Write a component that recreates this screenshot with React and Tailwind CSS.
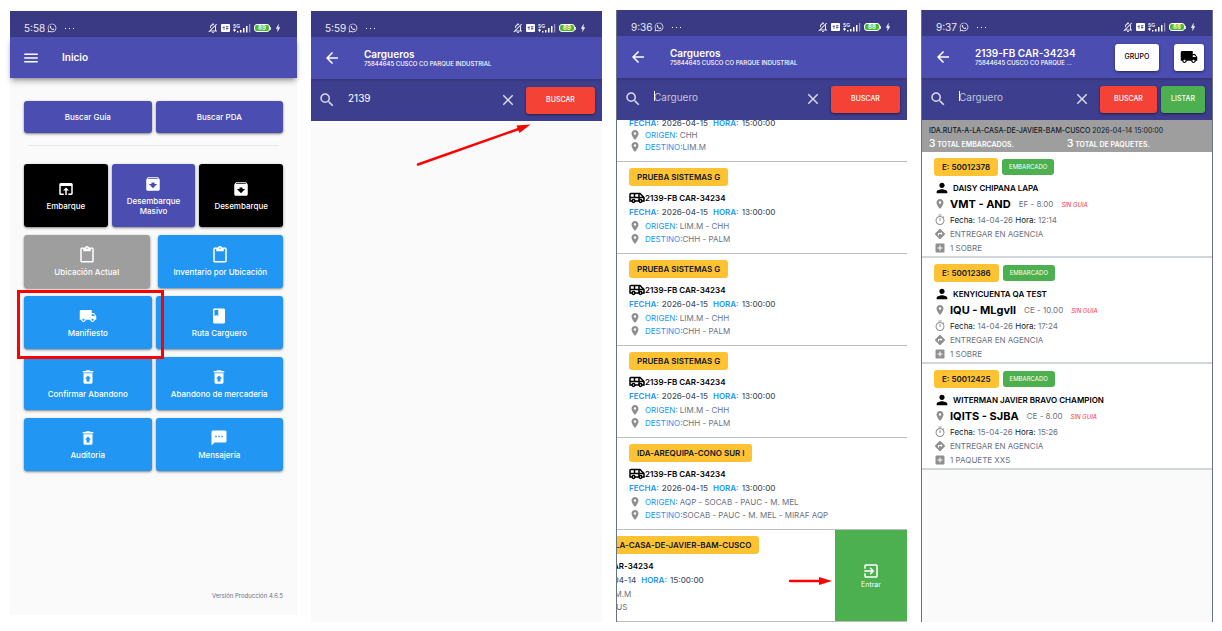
import React, { useState } from 'react';
import { FaWhatsapp } from 'react-icons/fa';
import {
  MdMenu,
  MdOpenInBrowser,
  MdArchive,
  MdContentPaste,
  MdLocalShipping,
  MdClass,
  MdRestoreFromTrash,
  MdTextsms,
  MdArrowBack,
  MdSearch,
  MdClose,
  MdPlace,
  MdPerson,
  MdOutlineTimer,
  MdDirections,
  MdAddBox,
  MdExitToApp,
  MdOutlineNotificationsOff,
  MdBolt,
} from 'react-icons/md';

const cargueros = [
  { id: 1, ruta: 'PRUEBA SISTEMAS G', origen: 'LIM.M - CHH', destino: 'CHH - PALM' },
  { id: 2, ruta: 'PRUEBA SISTEMAS G', origen: 'LIM.M - CHH', destino: 'CHH - PALM' },
  { id: 3, ruta: 'PRUEBA SISTEMAS G', origen: 'LIM.M - CHH', destino: 'CHH - PALM' },
  { id: 4, ruta: 'IDA-AREQUIPA-CONO SUR I', origen: 'AQP - SOCAB - PAUC - M. MEL', destino: 'SOCAB - PAUC - M. MEL - MIRAF AQP' },
];

const envios = [
  { guia: '50012378', nombre: 'DAISY CHIPANA LAPA', ruta: 'VMT - AND', monto: 'EF - 8.00', fecha: '14-04-26', hora: '12:14', detalle: '1 SOBRE' },
  { guia: '50012386', nombre: 'KENYICUENTA QA TEST', ruta: 'IQU - MLgvll', monto: 'CE - 10.00', fecha: '14-04-26', hora: '17:24', detalle: '1 SOBRE' },
  { guia: '50012425', nombre: 'WITERMAN JAVIER BRAVO CHAMPION', ruta: 'IQITS - SJBA', monto: 'CE - 8.00', fecha: '15-04-26', hora: '15:26', detalle: '1 PAQUETE XXS' },
];

function StatusBar({ time, battery }) {
  return (
    <div className="flex h-[26px] shrink-0 items-center bg-[#3a3a84] pl-[14px] pr-[15px] pt-2 text-white/90">
      <span className="text-[10px] leading-4">{time}</span>
      <FaWhatsapp className="ml-0.5 size-[10px]" />
      <span className="ml-2 flex gap-[3px]">
        <i className="size-px bg-white" />
        <i className="size-px bg-white" />
        <i className="size-px bg-white" />
      </span>
      <div className="ml-auto flex items-center gap-0.5">
        <MdOutlineNotificationsOff className="size-3 -scale-x-100" />
        <svg className="h-2 w-[9px]" viewBox="0 0 9 8">
          <rect width="9" height="8" rx="1" fill="#fff" />
          <path d="M1.500 3.500h2M3 2v4M5 2.500h2.500M5 4.500h2.500M6 3v3" stroke="#3a3a84" strokeWidth="0.700" />
        </svg>
        <svg className="h-[10px] w-[19px]" viewBox="0 0 19 10" fill="#fff">
          <text x="1" y="4.5" fontSize="5" fontWeight="600">5G</text>
          <path d="M1 7l1.5-1.5L4 7l-1.5 2zM5 8h1.5v1.5H5zM8 7h1.5v2.5H8zM11 5h1.5v4.5H11zM14 3h1.5v6.5H14z" />
          <path d="M17.2 1h1v8.5h-1z" opacity="0.6" />
        </svg>
        <span className="ml-px flex items-center">
          <span className="flex h-[8px] w-4 items-center justify-center rounded-[3px] border border-white bg-[#4fb82c] text-[6px] leading-none font-bold">
            {battery}
          </span>
          <i className="h-[3px] w-px bg-white/80" />
        </span>
        <MdBolt className="-mr-px size-[10px]" />
      </div>
    </div>
  );
}

function AppBar({ title, subtitle, children }) {
  return (
    <header className="flex h-[42px] shrink-0 items-center bg-[#4b4db0] pr-2 pl-3 text-white">
      <button aria-label="Volver">
        <MdArrowBack className="size-[18px]" />
      </button>
      <div className="ml-[23px] min-w-0 flex-1">
        <h2 className="text-[10px] leading-3 font-semibold whitespace-nowrap">{title}</h2>
        <p className="truncate text-[6px] leading-2 font-medium">{subtitle}</p>
      </div>
      {children}
    </header>
  );
}

function SearchBar({ initial = '', placeholder, caret, children }) {
  const [value, setValue] = useState(initial);
  return (
    <form
      onSubmit={(e) => e.preventDefault()}
      className="flex h-[42px] shrink-0 items-center bg-[#3e3e8e] pr-[7px] pl-[7px] text-white shadow-[inset_0_2px_2px_rgba(0,0,0,0.12)]"
    >
      <MdSearch className="size-[18px] shrink-0 text-white/80" />
      <label className="relative ml-3 min-w-0 flex-1 pb-1">
        <input
          value={value}
          onChange={(e) => setValue(e.target.value)}
          placeholder={placeholder}
          aria-label="Buscar carguero"
          className="block w-full bg-transparent text-[10px] leading-4 text-white outline-none placeholder:text-white/70"
        />
        {caret && <i className="absolute top-0.5 left-0 h-[10px] w-px bg-white" />}
      </label>
      <button type="button" aria-label="Limpiar" onClick={() => setValue('')} className="mr-[9px]">
        <MdClose className="size-[18px] text-white/80" />
      </button>
      {children}
    </form>
  );
}

function BarButton({ className, children }) {
  return (
    <button className={`h-[27px] rounded-[3px] text-[7px] font-medium shadow-sm shadow-black/40 ${className}`}>
      {children}
    </button>
  );
}

function Tile({ icon: Icon, color = 'bg-[#2196f3]', height = 'h-[53px]', children }) {
  return (
    <button
      className={`flex w-full flex-col items-center justify-center gap-[3px] rounded-[3px] px-2 text-[8px] leading-[10px] font-medium text-white shadow-sm shadow-black/40 ${height} ${color}`}
    >
      {Icon && <Icon className="size-[18px]" />}
      <span>{children}</span>
    </button>
  );
}

function Inicio() {
  return (
    <section className="mt-px mb-[7px] flex flex-col bg-[#fafafa]">
      <StatusBar time="5:58" battery="89" />
      <header className="flex h-[41px] items-center bg-[#4b4db0] pl-3 text-white shadow-md shadow-black/30">
        <button aria-label="Menú">
          <MdMenu className="size-[18px]" />
        </button>
        <h1 className="ml-[22px] text-[10px] font-semibold">Inicio</h1>
      </header>

      <main className="px-[14px] pt-[23px]">
        <div className="grid grid-cols-2 gap-1">
          <Tile color="bg-[#4b4db0]" height="h-8">Buscar Guía</Tile>
          <Tile color="bg-[#4b4db0]" height="h-8">Buscar PDA</Tile>
        </div>
        <hr className="mx-1 mt-3 mb-[18px] border-gray-200" />
        <div className="flex flex-col gap-2">
          <div className="grid grid-cols-3 gap-1">
            <Tile icon={MdOpenInBrowser} color="bg-black" height="h-[63px]">Embarque</Tile>
            <Tile icon={MdArchive} color="bg-[#4b4db0]" height="h-[63px]">Desembarque Masivo</Tile>
            <Tile icon={MdArchive} color="bg-black" height="h-[63px]">Desembarque</Tile>
          </div>
          <div className="grid grid-cols-2 gap-2">
            <Tile icon={MdContentPaste} color="bg-[#9e9e9e]">Ubicación Actual</Tile>
            <Tile icon={MdContentPaste}>Inventario por Ubicación</Tile>
          </div>
          <div className="grid grid-cols-2 gap-1">
            <div className="relative">
              <Tile icon={MdLocalShipping}>Manifiesto</Tile>
              <div className="pointer-events-none absolute -top-[6px] -right-3 -bottom-[10px] -left-[7px] z-10 border-3 border-[#ff0000]" />
            </div>
            <Tile icon={MdClass}>Ruta Carguero</Tile>
          </div>
          <div className="grid grid-cols-2 gap-1">
            <Tile icon={MdRestoreFromTrash}>Confirmar Abandono</Tile>
            <Tile icon={MdRestoreFromTrash}>Abandono de mercadería</Tile>
          </div>
          <div className="grid grid-cols-2 gap-1">
            <Tile icon={MdRestoreFromTrash}>Auditoria</Tile>
            <Tile icon={MdTextsms}>Mensajería</Tile>
          </div>
        </div>
      </main>

      <footer className="mt-auto px-[14px] pb-[14px] text-right text-[6px] leading-[10px] text-gray-500">
        Versión Producción 4.6.5
      </footer>
    </section>
  );
}

function Busqueda() {
  return (
    <section className="mt-px flex flex-col bg-[#fafafa]">
      <StatusBar time="5:59" battery="89" />
      <AppBar title="Cargueros" subtitle="75844645 CUSCO CO PARQUE INDUSTRIAL" />
      <SearchBar initial="2139">
        <BarButton className="w-[69px] bg-[#f44336]">BUSCAR</BarButton>
      </SearchBar>
      <div className="relative flex-1">
        <svg className="absolute top-0.5 right-[71px] h-11 w-[115px]" viewBox="0 0 115 44">
          <path d="M2 41.5L104 5.500" stroke="#f00" strokeWidth="2.500" strokeLinecap="round" />
          <path d="M114.500 1.500L100.500 2.500L103.500 10z" fill="#f00" />
        </svg>
      </div>
    </section>
  );
}

function VanIcon() {
  return (
    <svg className="h-3 w-4" viewBox="0 0 16 12" fill="none" stroke="#000" strokeWidth="1.5">
      <path d="M1 8.500V2.500a1 1 0 0 1 1-1h9l4 4v3.500H1zM1 5.500h14M5.500 1.500v4M10 1.500v7" />
      <circle cx="4.500" cy="9" r="1.400" fill="#fff" />
      <circle cx="11.500" cy="9" r="1.400" fill="#fff" />
    </svg>
  );
}

function RutaLine({ label, children }) {
  return (
    <p className="flex h-[13px] items-center text-[8px] whitespace-nowrap text-gray-500">
      <MdPlace className="mr-1 size-3 shrink-0 text-[#8f8f8f]" />
      <span className="text-[#2196f3]">{label}</span>
      {children}
    </p>
  );
}

function FechaLine({ fecha, hora }) {
  return (
    <p className="flex h-[14px] items-center gap-[3px] text-[8px] font-medium whitespace-nowrap text-gray-600">
      <span className="font-semibold text-[#2196f3]">FECHA:</span>
      <span>{fecha}</span>
      <span className="ml-0.5 font-semibold text-[#2196f3]">HORA:</span>
      <span>{hora}</span>
    </p>
  );
}

function CargueroInfo({ ruta, fecha = '2026-04-15', hora = '13:00:00', origen, destino }) {
  return (
    <div className="min-w-0 flex-1 pt-1.5 pb-2 pl-3">
      <h3 className="w-fit rounded-[3px] bg-[#ffc233] px-2 text-[8px] leading-[18px] font-semibold whitespace-nowrap text-gray-900">
        {ruta}
      </h3>
      <p className="mt-[5px] flex h-[14px] items-center text-[8px] font-semibold whitespace-nowrap text-black">
        <VanIcon />
        2139-FB CAR-34234
      </p>
      <FechaLine fecha={fecha} hora={hora} />
      <RutaLine label={'ORIGEN:\u00a0'}>{origen}</RutaLine>
      <RutaLine label="DESTINO:">{destino}</RutaLine>
    </div>
  );
}

function Cargueros() {
  return (
    <section className="flex flex-col overflow-hidden border-l border-gray-500 bg-white">
      <StatusBar time="9:36" battery="88" />
      <AppBar title="Cargueros" subtitle="75844645 CUSCO CO PARQUE INDUSTRIAL" />
      <SearchBar placeholder="Carguero" caret>
        <BarButton className="w-[69px] bg-[#f44336]">BUSCAR</BarButton>
      </SearchBar>

      <ul>
        {/* first row is scrolled under the search bar */}
        <li className="flex h-[42px] flex-col justify-end overflow-hidden border-b border-[#bdbdbd] pb-2 pl-3">
          <FechaLine fecha="2026-04-15" hora="15:00:00" />
          <RutaLine label={'ORIGEN:\u00a0'}>CHH</RutaLine>
          <RutaLine label="DESTINO:">LIM.M</RutaLine>
        </li>
        {cargueros.map((c) => (
          <li key={c.id} className="border-b border-[#bdbdbd]">
            <CargueroInfo {...c} />
          </li>
        ))}
        <li className="relative -ml-[72px] flex border-b border-[#bdbdbd]">
          <CargueroInfo
            ruta="IDA.RUTA-A-LA-CASA-DE-JAVIER-BAM-CUSCO"
            fecha="2026-04-14"
            hora="15:00:00"
            origen="LIM.M"
            destino="CUS"
          />
          <svg className="absolute top-[46px] right-[75px] h-[10px] w-[43px]" viewBox="0 0 43 10">
            <path d="M1 5h33" stroke="#f00" strokeWidth="2.500" strokeLinecap="round" />
            <path d="M43 5L30 1v8z" fill="#f00" />
          </svg>
          <button className="flex w-[72px] flex-col items-center justify-center bg-[#4caf50] text-[7px] leading-[10px] text-white">
            <MdExitToApp className="size-[18px]" />
            Entrar
          </button>
        </li>
      </ul>
    </section>
  );
}

function EnvioCard({ envio }) {
  return (
    <li className="border-b-2 border-gray-300 bg-white pt-1.5 pb-0.5 pl-3 text-[8px] whitespace-nowrap text-gray-500">
      <div className="flex h-[18px] items-center gap-1">
        <span className="rounded-[3px] bg-[#ffc233] px-2 leading-[18px] font-semibold text-gray-900">
          E: {envio.guia}
        </span>
        <span className="rounded-[3px] bg-[#4caf50] px-[7px] text-[6px] leading-4 text-white">EMBARCADO</span>
      </div>
      <p className="mt-[5px] flex h-[14px] items-center gap-[3px] font-semibold text-black">
        <MdPerson className="size-4" />
        {envio.nombre}
      </p>
      <p className="flex h-[18px] items-center">
        <MdPlace className="mr-1 size-3 text-[#8f8f8f]" />
        <b className="text-[11px] font-bold text-black">{envio.ruta}</b>
        <span className="ml-2">{envio.monto}</span>
        <em className="ml-2 text-[6px] text-red-500">SIN GUIA</em>
      </p>
      <p className="flex h-[14px] items-center">
        <MdOutlineTimer className="mr-1 size-3 text-[#8f8f8f]" />
        <span className="text-gray-900">Fecha:&nbsp;</span>
        {envio.fecha}
        <span className="text-gray-900">&nbsp;Hora:&nbsp;</span>
        {envio.hora}
      </p>
      <p className="flex h-[14px] items-center">
        <MdDirections className="mr-1 size-3 text-[#8f8f8f]" />
        ENTREGAR EN AGENCIA
      </p>
      <p className="flex h-[13px] items-center">
        <MdAddBox className="mr-1 size-3 text-[#8f8f8f]" />
        {envio.detalle}
      </p>
    </li>
  );
}

function Detalle() {
  return (
    <section className="flex flex-col border-x border-gray-500 bg-[#fafafa]">
      <StatusBar time="9:37" battery="88" />
      <AppBar title="2139-FB CAR-34234" subtitle="75844645 CUSCO CO PARQUE ...">
        <BarButton className="w-11 bg-white text-black">GRUPO</BarButton>
        <button
          aria-label="Camión"
          className="ml-[15px] flex h-[27px] w-[30px] items-center justify-center rounded-[3px] bg-white text-black shadow-sm shadow-black/40"
        >
          <MdLocalShipping className="size-[18px]" />
        </button>
      </AppBar>
      <SearchBar placeholder="Carguero" caret>
        <BarButton className="w-[57px] bg-[#f44336]">BUSCAR</BarButton>
        <BarButton className="ml-1 w-11 bg-[#4caf50]">LISTAR</BarButton>
      </SearchBar>

      <div className="h-8 bg-[#9e9e9e] px-[7px] pt-[5px] text-[7px] leading-3 whitespace-nowrap text-gray-900">
        <p>
          <span className="font-medium">IDA.RUTA-A-LA-CASA-DE-JAVIER-BAM-CUSCO</span> 2026-04-14 15:00:00
        </p>
        <div className="grid grid-cols-2 font-semibold text-white">
          <p><span className="text-[10px]">3</span> TOTAL EMBARCADOS.</p>
          <p><span className="text-[10px]">3</span> TOTAL DE PAQUETES.</p>
        </div>
      </div>
      <ul>
        {envios.map((envio) => (
          <EnvioCard key={envio.guia} envio={envio} />
        ))}
      </ul>
    </section>
  );
}

function App() {
  return (
    <div className="grid min-h-screen grid-cols-[287fr_291fr_291fr_292fr] gap-[14px] bg-white pt-[10px] pr-[9px] pb-[9px] pl-[10px] font-['Inter','Liberation_Sans',sans-serif]">
      <Inicio />
      <Busqueda />
      <Cargueros />
      <Detalle />
    </div>
  );
}

export default App;
